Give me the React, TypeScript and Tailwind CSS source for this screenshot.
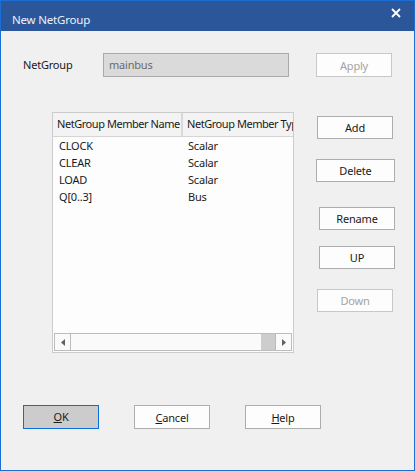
import React from "react";

type Member = { name: string; kind: string };

const members: Member[] = [
  { name: "CLOCK", kind: "Scalar" },
  { name: "CLEAR", kind: "Scalar" },
  { name: "LOAD", kind: "Scalar" },
  { name: "Q[0..3]", kind: "Bus" },
];

const font = { fontFamily: '"Noto Sans", "Segoe UI", Arial, sans-serif' };

function Btn({
  children,
  className = "",
  disabled = false,
}: {
  children: React.ReactNode;
  className?: string;
  disabled?: boolean;
}) {
  return (
    <button
      className={
        "h-[23px] w-[76px] border bg-[#fdfdfd] text-[11px] tracking-[-0.2px] leading-none flex items-center justify-center " +
        (disabled ? "border-[#c8c8c8] text-[#a3a3a3] " : "border-[#adadad] text-[#1a1a1a] ") +
        className
      }
    >
      {children}
    </button>
  );
}

export default function App() {
  return (
    <div
      className="w-[415px] h-[471px] border border-[#1b6fd4] bg-[#f0f0f0] flex flex-col text-[11px] tracking-[-0.2px] text-[#1a1a1a]"
      style={font}
    >
      {/* title bar */}
      <div className="h-[30px] bg-[#2b579a] flex items-start justify-between pl-[11px] pr-[13px]">
        <span className="mt-[10px] text-[11.5px] text-[#eef0f6]">New NetGroup</span>
        <svg width="10" height="10" viewBox="0 0 10 10" className="mt-[7px]">
          <path d="M1 1L9 9M9 1L1 9" stroke="#ffffff" strokeWidth="1.8" />
        </svg>
      </div>

      {/* name row */}
      <div className="flex items-start mt-[22px] pl-[22px]">
        <span className="w-[80px] mt-[4px]">NetGroup</span>
        <div className="w-[186px] h-[24px] border border-[#a9a9a9] bg-[#dadada] flex items-center pl-[5px] text-[#6a6a6a]">
          mainbus
        </div>
        <Btn disabled className="ml-[27px] h-[24px]">
          Apply
        </Btn>
      </div>

      {/* member list + side buttons */}
      <div className="flex items-start mt-[35px] pl-[51px]">
        <div className="w-[242px] h-[241px] border border-[#cccccc] bg-[#fdfdfd] flex flex-col">
          <div className="flex h-[24px] bg-[#f3f3f3] border-b border-[#d5d5d5] overflow-hidden whitespace-nowrap tracking-[-0.45px]">
            <div className="w-[130px] shrink-0 border-r-2 border-[#d9d9d9] flex items-center pl-[4px]">
              NetGroup Member Name
            </div>
            <div className="flex items-center pl-[4px]">NetGroup Member Type</div>
          </div>
          <div className="flex-1 flex flex-col pt-[1px]">
            {members.map((m) => (
              <div key={m.name} className="flex h-[17px] items-center">
                <span className="w-[135px] pl-[6px]">{m.name}</span>
                <span>{m.kind}</span>
              </div>
            ))}
          </div>
          {/* horizontal scrollbar */}
          <div className="h-[18px] mx-[1px] mb-[1px] flex border border-[#bcbcbc] bg-[#fafafa]">
            <div className="w-[16px] border-r border-[#bcbcbc] flex items-center justify-center">
              <svg width="4" height="7" viewBox="0 0 4 7">
                <path d="M4 0L0 3.5L4 7Z" fill="#606060" />
              </svg>
            </div>
            <div className="flex-1" />
            <div className="w-[14px] bg-[#cdcdcd]" />
            <div className="w-[16px] border-l border-[#bcbcbc] flex items-center justify-center">
              <svg width="4" height="7" viewBox="0 0 4 7">
                <path d="M0 0L4 3.5L0 7Z" fill="#606060" />
              </svg>
            </div>
          </div>
        </div>

        <div className="flex flex-col ml-[22px]">
          <Btn className="mt-[4px] ml-[1px]">Add</Btn>
          <Btn className="mt-[20px] w-[79px]">Delete</Btn>
          <Btn className="mt-[25px] ml-[3px]">Rename</Btn>
          <Btn className="mt-[16px] ml-[3px]">UP</Btn>
          <Btn disabled className="mt-[20px] ml-[1px]">
            Down
          </Btn>
        </div>
      </div>

      {/* dialog buttons */}
      <div className="flex mt-[52px] pl-[22px] gap-[35px]">
        <button className="h-[24px] w-[76px] border border-[#0a6fd8] bg-[#cccccc] text-[11px] flex items-center justify-center">
          <span>
            <u>O</u>K
          </span>
        </button>
        <Btn className="h-[24px]">
          <span>
            <u>C</u>ancel
          </span>
        </Btn>
        <Btn className="h-[24px]">
          <span>
            <u>H</u>elp
          </span>
        </Btn>
      </div>
    </div>
  );
}
